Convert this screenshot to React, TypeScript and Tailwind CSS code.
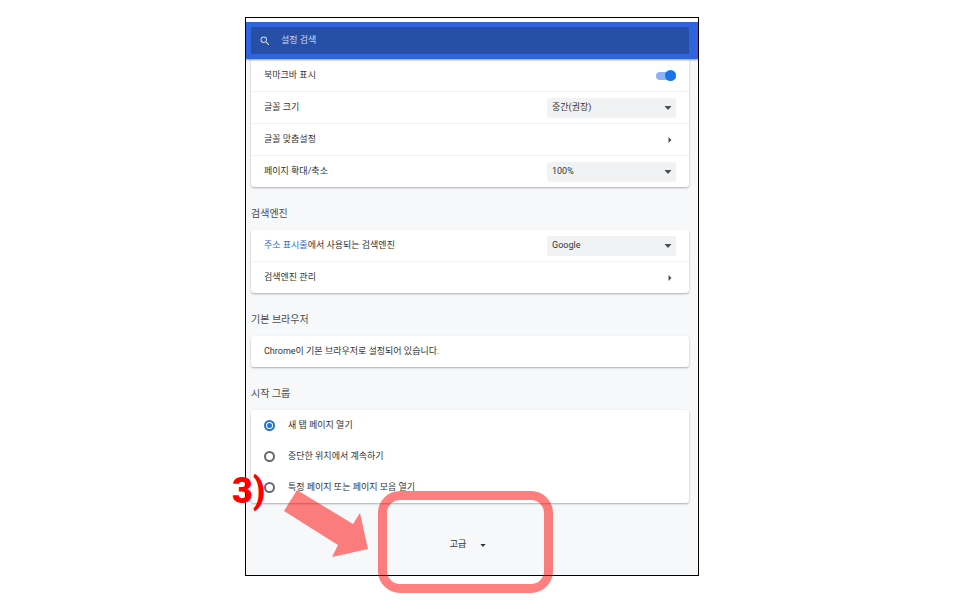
import { useState } from 'react';
import type { ReactNode } from 'react';
import { MdSearch } from 'react-icons/md';

const startupOptions = [
  { id: 'new-tab', label: '새 탭 페이지 열기' },
  { id: 'continue', label: '중단한 위치에서 계속하기' },
  { id: 'specific', label: '특정 페이지 또는 페이지 모음 열기' },
];

function CaretDown({ className }: { className?: string }) {
  return (
    <svg viewBox="0 0 8 4" className={className} fill="currentColor" aria-hidden="true">
      <path d="M0.5 0h7L4 4z" />
    </svg>
  );
}

function Card({ children, className = '' }: { children: ReactNode; className?: string }) {
  return (
    <div className={`rounded-[3px] bg-white shadow-[0_1px_2px_rgba(60,64,67,0.4)] ${className}`}>
      {children}
    </div>
  );
}

function Row({ children }: { children: ReactNode }) {
  return (
    <div className="flex h-8 items-center justify-between border-b border-[#f3f3f3] px-[13px] last:h-[31px] last:border-b-0">
      {children}
    </div>
  );
}

function SectionTitle({ children }: { children: ReactNode }) {
  return <h2 className="flex h-[43px] items-center pt-[10px] text-[10px] text-[#4a4d51]">{children}</h2>;
}

function SelectBox({ id, options }: { id: string; options: string[] }) {
  return (
    <div className="relative w-[129px]">
      <select id={id} className="block h-5 w-full appearance-none rounded-xs bg-[#f1f2f3] pr-5 pl-[5px] text-[9px] text-[#333]">
        {options.map((option) => (
          <option key={option}>{option}</option>
        ))}
      </select>
      <CaretDown className="pointer-events-none absolute top-2 right-1 h-1 w-2 text-[#4a4d51]" />
    </div>
  );
}

function LinkRow({ label }: { label: string }) {
  return (
    <Row>
      <button type="button" className="flex h-full w-full items-center justify-between pr-1">
        {label}
        <svg viewBox="0 0 4 6" className="h-[6px] w-1 text-[#4a4d51]" fill="currentColor" aria-hidden="true">
          <path d="M0.5 0v6L3.5 3z" />
        </svg>
      </button>
    </Row>
  );
}

export default function App() {
  const [showBookmarks, setShowBookmarks] = useState(true);
  const [startup, setStartup] = useState('new-tab');

  return (
    <main className="min-h-screen bg-white pt-[17px] pr-4 pb-8 font-['Roboto','Noto_Sans_CJK_KR',sans-serif] text-[9px] text-[#333]">
      <div className="relative mx-auto w-full max-w-[454px] border border-black bg-[#f7f8fa]">
        <header className="relative border-t-4 border-white bg-[#3064dc] shadow-[0_1px_2px_rgba(0,0,0,0.4)]">
          <div className="py-[5px] pr-[9px] pl-[5px]">
            <label className="flex h-[27px] items-center gap-[10px] bg-[#284fa6] pl-2 text-[#cdd8ef]">
              <MdSearch className="size-3" aria-hidden="true" />
              <input
                type="search"
                aria-label="설정 검색"
                placeholder="설정 검색"
                className="min-w-0 flex-1 bg-transparent outline-none placeholder:text-[#cdd8ef]"
              />
            </label>
          </div>
        </header>

        <div className="pr-[9px] pl-[5px]">
          <Card className="pt-px">
            <Row>
              <label htmlFor="bookmarks">북마크바 표시</label>
              <input
                id="bookmarks"
                type="checkbox"
                role="switch"
                checked={showBookmarks}
                onChange={(e) => setShowBookmarks(e.target.checked)}
                className="flex h-2 w-5 appearance-none items-center rounded-full bg-gray-300 before:size-[11px] before:shrink-0 before:rounded-full before:bg-white before:shadow checked:justify-end checked:bg-[#8cb4f5] checked:before:bg-[#1a73e8] checked:before:shadow-none"
              />
            </Row>
            <Row>
              <label htmlFor="font-size">글꼴 크기</label>
              <SelectBox id="font-size" options={['중간(권장)', '작게', '크게']} />
            </Row>
            <LinkRow label="글꼴 맞춤설정" />
            <Row>
              <label htmlFor="zoom">페이지 확대/축소</label>
              <SelectBox id="zoom" options={['100%', '125%', '150%']} />
            </Row>
          </Card>

          <SectionTitle>검색엔진</SectionTitle>
          <Card>
            <Row>
              <label htmlFor="engine">
                <a href="#address-bar" className="text-[#3367d6]">주소 표시줄</a>에서 사용되는 검색엔진
              </label>
              <SelectBox id="engine" options={['Google', 'Bing']} />
            </Row>
            <LinkRow label="검색엔진 관리" />
          </Card>

          <SectionTitle>기본 브라우저</SectionTitle>
          <Card>
            <Row>
              <p>Chrome이 기본 브라우저로 설정되어 있습니다.</p>
            </Row>
          </Card>

          <SectionTitle>시작 그룹</SectionTitle>
          <Card>
            {startupOptions.map((option) => (
              <label key={option.id} className="flex h-[31px] items-center gap-[13px] px-[13px]">
                <input
                  type="radio"
                  name="startup"
                  checked={startup === option.id}
                  onChange={() => setStartup(option.id)}
                  className="grid size-[11px] appearance-none place-items-center rounded-full border-2 border-[#66696d] checked:border-[#1a73e8] checked:before:size-[5px] checked:before:rounded-full checked:before:bg-[#1a73e8]"
                />
                {option.label}
              </label>
            ))}
          </Card>
        </div>

        <div className="flex justify-center pt-8 pr-2 pb-5">
          <button type="button" className="flex h-5 items-center gap-[14px]">
            고급
            <CaretDown className="h-[3px] w-[6px]" />
          </button>
        </div>

        {/* step annotation */}
        <span className="absolute bottom-16 -left-[14px] font-['Roboto',sans-serif] text-4xl leading-10 font-black text-[#f00]">
          3)
        </span>
        <svg viewBox="0 0 84 68" className="absolute bottom-[17px] left-[38px] h-[68px] w-[84px]" aria-hidden="true">
          <path d="M13 0L69 34L76 23L84 59L48 67L54 55L0 21z" fill="#ff0000" fillOpacity="0.5" />
        </svg>
        <div className="absolute -bottom-[18px] left-[132px] h-[102px] w-[175px] rounded-[22px] border-[9px] border-[#ff0000]/50" />
      </div>
    </main>
  );
}
